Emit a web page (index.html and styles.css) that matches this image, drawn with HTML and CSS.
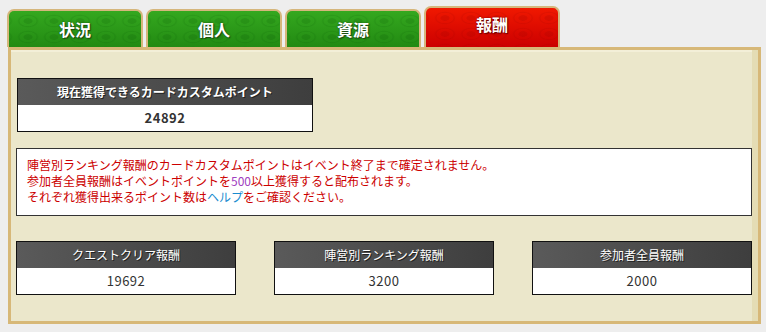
FILE: index.html
```html
<!DOCTYPE html>
<html lang="ja">
<head>
    <meta charset="UTF-8">
    <title>報酬</title>
    <link rel="stylesheet" href="styles.css">
</head>
<body>
    <div class="tabs">
        <div class="tab">状況</div>
        <div class="tab">個人</div>
        <div class="tab">資源</div>
        <div class="tab active">報酬</div>
    </div>

    <div class="panel">
        <div class="point-box total">
            <div class="point-head">現在獲得できるカードカスタムポイント</div>
            <div class="point-value">24892</div>
        </div>

        <div class="notice">
            陣営別ランキング報酬のカードカスタムポイントはイベント終了まで確定されません。<br>
            参加者全員報酬はイベントポイントを<span class="num">500</span>以上獲得すると配布されます。<br>
            それぞれ獲得出来るポイント数は<a href="#" class="help">ヘルプ</a>をご確認ください。
        </div>

        <div class="rewards">
            <div class="point-box">
                <div class="point-head">クエストクリア報酬</div>
                <div class="point-value">19692</div>
            </div>
            <div class="point-box">
                <div class="point-head">陣営別ランキング報酬</div>
                <div class="point-value">3200</div>
            </div>
            <div class="point-box">
                <div class="point-head">参加者全員報酬</div>
                <div class="point-value">2000</div>
            </div>
        </div>
    </div>
</body>
</html>
```

FILE: styles.css
```css
body {
    margin: 0;
    background-color: #eeeeee;
    font-family: "Noto Sans CJK JP", "DejaVu Sans", sans-serif;
    width: 766px;
    height: 332px;
    overflow: hidden;
}
.tabs {
    display: flex;
    align-items: flex-end;
    gap: 3px;
    padding-left: 7px;
    height: 47px;
}
.tab {
    width: 132px;
    height: 36px;
    border: 2px solid #d5b67c;
    border-bottom: none;
    border-radius: 7px 7px 0 0;
    color: white;
    font-size: 16px;
    font-weight: bold;
    text-align: center;
    line-height: 36px;
    text-shadow: 0 0 2px #1b4a10, 1px 1px 1px #1b4a10;
    background-color: #2a9a18;
    background-image:
        radial-gradient(ellipse at 50% 50%, rgba(0, 70, 0, 0.14) 4px, transparent 5px),
        radial-gradient(ellipse at 50% 50%, transparent 8px, rgba(0, 80, 0, 0.12) 9px, transparent 11px),
        linear-gradient(#34a81f, #228a12);
    background-size: 26px 16px, 26px 16px, 100% 100%;
    background-position: 6px 2px, 6px 2px, 0 0;
}
.tab.active {
    height: 39px;
    line-height: 33px;
    text-shadow: 0 0 2px #6a0000, 1px 1px 1px #6a0000;
    background-color: #e00a00;
    background-image:
        radial-gradient(ellipse at 50% 50%, rgba(130, 0, 0, 0.14) 4px, transparent 5px),
        radial-gradient(ellipse at 50% 50%, transparent 8px, rgba(140, 0, 0, 0.12) 9px, transparent 11px),
        linear-gradient(#f01800, #cc0000);
    background-size: 26px 16px, 26px 16px, 100% 100%;
    background-position: 6px 2px, 6px 2px, 0 0;
}
.panel {
    margin-left: 8px;
    width: 736px;
    padding: 28px 6px 26px 5px;
    border: 3px solid #d7b878;
    background-color: #ebe7cb;
    box-shadow: inset -6px 0 0 #e4dcb4, inset 0 2px 0 #f3efd8;
}
.point-box {
    border: 1px solid #111;
    background: white;
    width: 218px;
}
.point-box.total {
    width: 294px;
    margin-left: 1px;
}
.point-head {
    height: 26px;
    line-height: 26px;
    color: white;
    font-size: 12px;
    text-align: center;
    background: linear-gradient(to right, #5a5a5a, #3e3e3e);
    text-shadow: 1px 1px 0 #222;
}
.total .point-head {
    font-weight: bold;
}
.point-value {
    height: 26px;
    line-height: 26px;
    font-size: 13px;
    color: #333;
    text-align: center;
    letter-spacing: 0.5px;
}
.total .point-value {
    font-weight: bold;
}
.notice {
    margin-top: 16px;
    border: 1px solid #333;
    background: white;
    padding: 8px 10px 10px;
    color: #cc0000;
    font-size: 12px;
    line-height: 16px;
}
.num {
    color: #a040c0;
}
.help {
    color: #1a8ccf;
    text-decoration: none;
}
.rewards {
    display: flex;
    justify-content: space-between;
    margin-top: 25px;
}
```
